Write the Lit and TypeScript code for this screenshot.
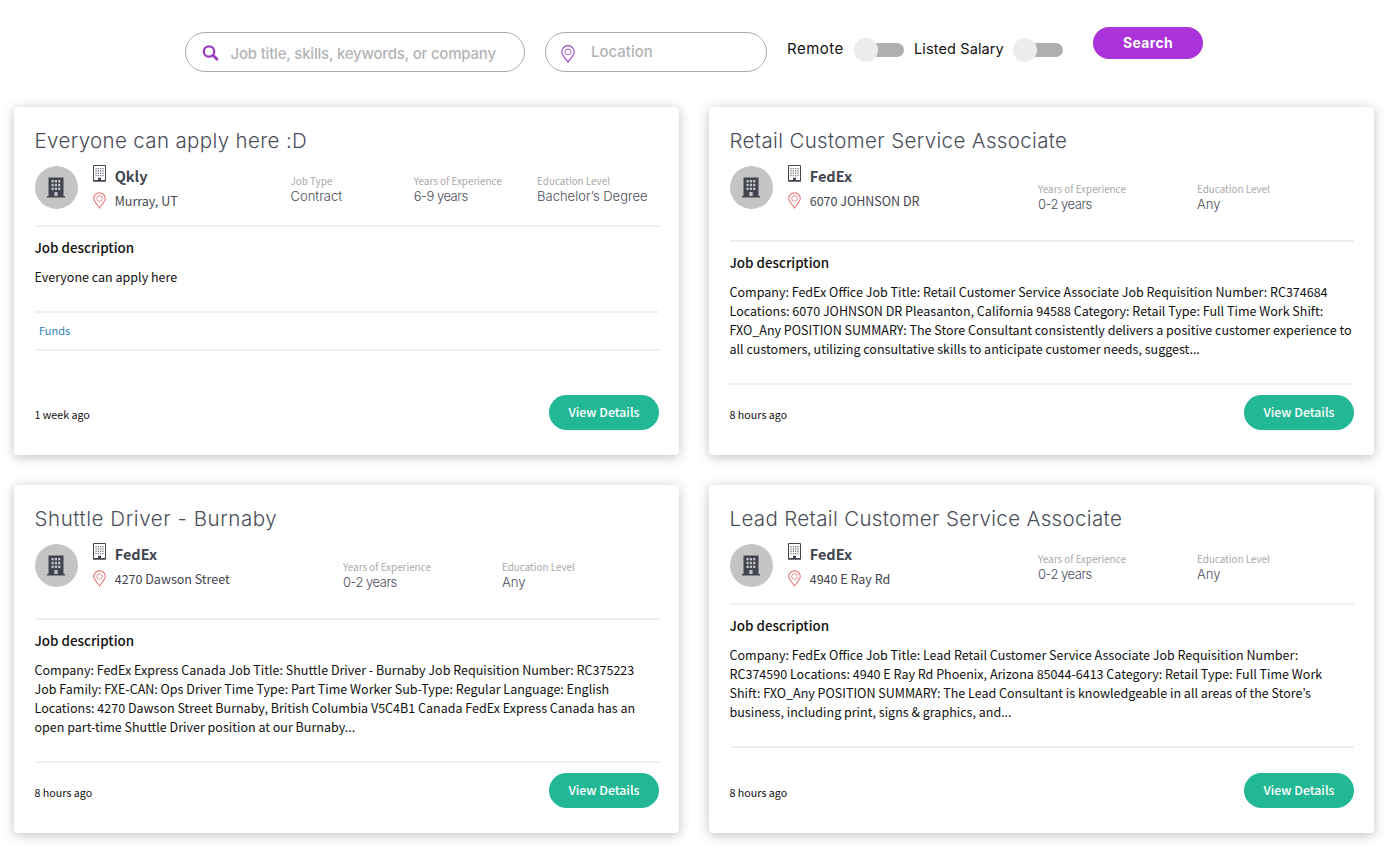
import { LitElement, html, css, svg, nothing } from "lit";
import { customElement, property } from "lit/decorators.js";

interface Fact {
  label: string;
  value: string;
}

interface Job {
  title: string;
  company: string;
  place: string;
  facts: Fact[];
  tall: boolean;
  lines: string[];
  tags: string[];
  age: string;
}

const JOBS: Job[] = [
  {
    title: "Everyone can apply here :D",
    company: "Qkly",
    place: "Murray, UT",
    facts: [
      { label: "Job Type", value: "Contract" },
      { label: "Years of Experience", value: "6-9 years" },
      { label: "Education Level", value: "Bachelor’s Degree" },
    ],
    tall: false,
    lines: ["Everyone can apply here"],
    tags: ["Funds"],
    age: "1 week ago",
  },
  {
    title: "Retail Customer Service Associate",
    company: "FedEx",
    place: "6070 JOHNSON DR",
    facts: [
      { label: "Years of Experience", value: "0-2 years" },
      { label: "Education Level", value: "Any" },
    ],
    tall: true,
    lines: [
      "Company: FedEx Office Job Title: Retail Customer Service Associate Job Requisition Number: RC374684",
      "Locations: 6070 JOHNSON DR Pleasanton, California 94588 Category: Retail Type: Full Time Work Shift:",
      "FXO_Any POSITION SUMMARY: The Store Consultant consistently delivers a positive customer experience to",
      "all customers, utilizing consultative skills to anticipate customer needs, suggest...",
    ],
    tags: [],
    age: "8 hours ago",
  },
  {
    title: "Shuttle Driver - Burnaby",
    company: "FedEx",
    place: "4270 Dawson Street",
    facts: [
      { label: "Years of Experience", value: "0-2 years" },
      { label: "Education Level", value: "Any" },
    ],
    tall: true,
    lines: [
      "Company: FedEx Express Canada Job Title: Shuttle Driver - Burnaby Job Requisition Number: RC375223",
      "Job Family: FXE-CAN: Ops Driver Time Type: Part Time Worker Sub-Type: Regular Language: English",
      "Locations: 4270 Dawson Street Burnaby, British Columbia V5C4B1 Canada FedEx Express Canada has an",
      "open part-time Shuttle Driver position at our Burnaby...",
    ],
    tags: [],
    age: "8 hours ago",
  },
  {
    title: "Lead Retail Customer Service Associate",
    company: "FedEx",
    place: "4940 E Ray Rd",
    facts: [
      { label: "Years of Experience", value: "0-2 years" },
      { label: "Education Level", value: "Any" },
    ],
    tall: false,
    lines: [
      "Company: FedEx Office Job Title: Lead Retail Customer Service Associate Job Requisition Number:",
      "RC374590 Locations: 4940 E Ray Rd Phoenix, Arizona 85044-6413 Category: Retail Type: Full Time Work",
      "Shift: FXO_Any POSITION SUMMARY: The Lead Consultant is knowledgeable in all areas of the Store’s",
      "business, including print, signs & graphics, and...",
    ],
    tags: [],
    age: "8 hours ago",
  },
];

const pinIcon = (width: number, height: number) => html`
  <svg width=${width} height=${height} viewBox="0 0 14 18" fill="none" stroke="currentColor">
    <path d="M7 17C5 13.6 .8 10.4 .8 6.8a6.2 6.2 0 0 1 12.4 0C13.200 10.400 9 13.600 7 17z" stroke-width="1.100"></path>
    <circle cx="7" cy="6.800" r="3" stroke-width=".8"></circle>
  </svg>
`;

const windows = (xs: number[], ys: number[], w: number, h: number) =>
  ys.map((y) => xs.map((x) => svg`<rect x=${x} y=${y} width=${w} height=${h}></rect>`));

@customElement("job-card")
export class JobCard extends LitElement {
  @property({ attribute: false }) job!: Job;

  static styles = css`
    :host {
      display: flex;
      flex-direction: column;
      box-sizing: border-box;
      height: 348px;
      padding: 21px 20px 25px 20.500px;
      background: #fff;
      border-radius: 4px;
      box-shadow: 0 2px 12px rgba(0, 0, 0, 0.25);
      font-family: "Noto Sans CJK KR", "Noto Sans", sans-serif;
      color: #111;
      white-space: nowrap;
    }
    .title {
      margin: 0;
      height: 26px;
      font: 300 20.500px/26px Inter, sans-serif;
      letter-spacing: 0.35px;
      color: #4a4d5a;
    }
    .title.short {
      letter-spacing: 0.570px;
    }
    .head {
      display: flex;
      height: 71px;
      border-bottom: 2px solid #efefef;
    }
    .head.tall {
      height: 86px;
    }
    .avatar {
      display: flex;
      flex: none;
      width: 43.500px;
      height: 43.500px;
      margin-top: 11.700px;
      border-radius: 50%;
      background: #c4c4c4;
      align-items: center;
      justify-content: center;
    }
    .who {
      display: grid;
      flex: none;
      grid-template-columns: 13px auto;
      grid-template-rows: 25px 25px;
      column-gap: 8.700px;
      align-content: start;
      justify-content: start;
      margin: 9px 0 0 15px;
      width: 197px;
    }
    .who.wide {
      width: 249.500px;
    }
    .who svg {
      display: block;
      margin-top: 2px;
    }
    .who .pin {
      color: #e8696b;
      margin-top: 4px;
      height: 17px;
    }
    .who .pin svg {
      margin: 0;
    }
    .company {
      font-size: 14.500px;
      font-weight: 700;
      line-height: 25px;
      color: #42444f;
    }
    .place {
      font-size: 12.500px;
      line-height: 25px;
      color: #42444f;
    }
    .facts {
      display: grid;
      flex: 1;
      min-width: 0;
      grid-template-columns: 123.300px 123.300px auto;
      align-content: start;
      justify-content: start;
      padding: 20px 0 0 0.500px;
    }
    .facts.wide {
      grid-template-columns: 159px auto;
    }
    .tall .facts {
      padding-top: 28px;
    }
    .label {
      font-size: 9.870px;
      line-height: 15px;
      color: #a9a9ab;
    }
    .value {
      font: 300 13px/15px Inter, sans-serif;
      letter-spacing: 0;
      color: #4a4d5a;
    }
    .value.years {
      letter-spacing: -0.500px;
    }
    .subtitle {
      margin: 11px 0 11px;
      font-size: 13.400px;
      font-weight: 500;
      line-height: 18px;
    }
    .text {
      padding-bottom: 25px;
      font-size: 12.520px;
      line-height: 19px;
      border-bottom: 2px solid #efefef;
    }
    .tags {
      height: 36px;
      padding-left: 4.500px;
      border-bottom: 2px solid #efefef;
      font-size: 11px;
      line-height: 34px;
      color: #2f7fb9;
    }
    .foot {
      display: flex;
      justify-content: space-between;
      margin-top: auto;
      height: 35px;
    }
    .age {
      font-size: 10.700px;
      line-height: 39px;
    }
    .details {
      width: 110px;
      height: 35px;
      padding: 0;
      border: 0;
      border-radius: 18px;
      background: #23b895;
      color: #fff;
      font: 500 12.300px/35px "Noto Sans CJK KR", sans-serif;
    }
  `;

  render() {
    const j = this.job;
    const wide = j.facts.length < 3 ? "wide" : "";
    return html`
      <h2 class="title ${j.title.length < 25 ? "short" : ""}">${j.title}</h2>
      <div class="head ${j.tall ? "tall" : ""}">
        <div class="avatar">
          <svg width="18" height="21" viewBox="0 0 18 21">
            <path fill="#42444f" d="M1.500 .5h15V19H18v1.500H0V19h1.500z"></path>
            <g fill="#c4c4c4">${windows([4.5, 7.8, 11.1], [3, 6.8, 10.6], 2.2, 2.4)}<rect x="7.400" y="15" width="3.200" height="4"></rect></g>
          </svg>
        </div>
        <div class="who ${wide}">
          <svg width="13" height="17" viewBox="0 0 13 17">
            <path fill="none" stroke="#42444f" d="M.5.500h12v15.500H.5z"></path>
            <g fill="#42444f" opacity=".7">${windows([2.4, 4.7, 7, 9.3], [3, 5.3, 7.6, 9.9], 1.3, 1.3)}</g>
            <path fill="#42444f" d="M0 15h13v1.500H0zM5 12.800h3V16H5z"></path>
          </svg>
          <span class="company">${j.company}</span>
          <span class="pin">${pinIcon(13, 17)}</span>
          <span class="place">${j.place}</span>
        </div>
        <div class="facts ${wide}">
          ${j.facts.map(
            (f) => html`<div>
              <div class="label">${f.label}</div>
              <div class="value ${f.value.endsWith("years") ? "years" : ""}">${f.value}</div>
            </div>`
          )}
        </div>
      </div>
      <h3 class="subtitle">Job description</h3>
      <div class="text">${j.lines.map((l) => html`<div>${l}</div>`)}</div>
      ${j.tags.length ? html`<div class="tags">${j.tags.map((t) => html`<span>${t}</span>`)}</div>` : nothing}
      <div class="foot">
        <span class="age">${j.age}</span>
        <button class="details">View Details</button>
      </div>
    `;
  }
}

@customElement("app-root")
export class AppRoot extends LitElement {
  static styles = css`
    :host {
      display: block;
      box-sizing: border-box;
      width: 1390px;
      height: 851px;
      overflow: hidden;
      background: #fff;
      font-family: Inter, sans-serif;
      white-space: nowrap;
    }
    .bar {
      display: flex;
      align-items: flex-start;
      height: 75px;
      padding: 32px 0 0 185px;
    }
    .field {
      display: flex;
      box-sizing: border-box;
      height: 40px;
      border: 1px solid #a9a9ab;
      border-radius: 20px;
      font-size: 15px;
      font-weight: 500;
      color: #b4b4b6;
    }
    .keywords {
      width: 340px;
      padding-left: 15.500px;
      line-height: 42px;
      gap: 11px;
    }
    .keywords svg {
      margin-top: 11px;
    }
    .keywords .hint {
      letter-spacing: -0.200px;
    }
    .location {
      width: 222px;
      margin-left: 20px;
      padding-left: 14.500px;
      line-height: 38px;
      gap: 16.500px;
    }
    .violet {
      color: #9b3fc4;
      padding-top: 12px;
      line-height: 0;
    }
    .toggle-label {
      font-size: 14.500px;
      line-height: 34px;
      color: #111;
    }
    .remote {
      width: 67px;
      margin-left: 20px;
      font-size: 15px;
      letter-spacing: 0.500px;
    }
    .salary {
      width: 99px;
      margin-left: 10px;
      letter-spacing: 0.120px;
    }
    .toggle {
      display: flex;
      align-items: center;
      width: 50px;
      height: 14px;
      margin-top: 11px;
      border-radius: 7px;
      background: linear-gradient(90deg, transparent 12px, #afafaf 12px);
    }
    .knob {
      flex: none;
      width: 24px;
      height: 24px;
      border-radius: 50%;
      background: #ececec;
    }
    .search {
      width: 110px;
      height: 32px;
      margin: -5px 0 0 30px;
      padding: 0;
      border: 0;
      border-radius: 16px;
      background: #aa33d9;
      color: #fff;
      font: 700 14px/32px Inter, sans-serif;
      letter-spacing: 0.300px;
    }
    .grid {
      display: grid;
      grid-template-columns: 665px 665px;
      gap: 30px;
      padding-left: 14px;
    }
  `;

  render() {
    return html`
      <div class="bar">
        <div class="field keywords">
          <svg width="18" height="18" viewBox="0 0 18 18" fill="none" stroke="#9b3fc4">
            <circle cx="7" cy="7.500" r="5.200" stroke-width="2.300"></circle>
            <path d="M11 11.300l4 4" stroke-width="2.800" stroke-linecap="round"></path>
          </svg>
          <span class="hint">Job title, skills, keywords, or company</span>
        </div>
        <div class="field location">
          <span class="violet">${pinIcon(14, 18)}</span>
          <span class="hint">Location</span>
        </div>
        <span class="toggle-label remote">Remote</span>
        <div class="toggle"><div class="knob"></div></div>
        <span class="toggle-label salary">Listed Salary</span>
        <div class="toggle"><div class="knob"></div></div>
        <button class="search">Search</button>
      </div>
      <div class="grid">${JOBS.map((j) => html`<job-card .job=${j}></job-card>`)}</div>
    `;
  }
}
